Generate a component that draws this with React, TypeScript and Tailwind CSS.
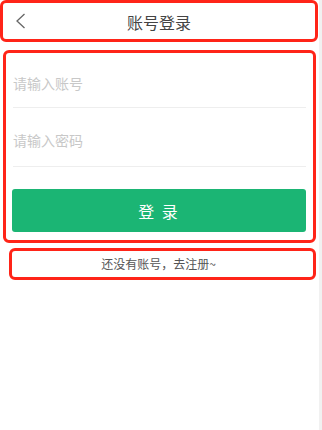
import React from "react";

export default function App() {
  const font = { fontFamily: '"Noto Sans CJK SC", "Noto Sans", sans-serif' };
  return (
    <div className="w-[322px] h-[430px] bg-white flex overflow-hidden" style={font}>
      <div className="w-[319px] flex flex-col">
        {/* header */}
        <div className="w-[318px] h-[42px] border-[3px] border-[#ff2418] rounded-[6px] grid grid-cols-[1fr_auto_1fr] items-center">
          <div className="pl-[13px] flex items-center">
            <svg width="10" height="16" viewBox="0 0 10 16" fill="none">
              <polyline points="8.5,1 1,8 8.5,15" stroke="#666" strokeWidth="1.3" fill="none" />
            </svg>
          </div>
          <div className="text-[16px] leading-[20px] text-[#444] pt-[1px]">账号登录</div>
          <div />
        </div>

        {/* form */}
        <div className="mt-[8px] ml-[3px] w-[313px] border-[3px] border-[#ff2418] rounded-[6px] pl-[6px] pr-[7px] pb-[8px] flex flex-col">
          <div className="h-[55px] border-b border-[#eeeeee] flex items-end pb-[14px] ml-[1px]">
            <span className="text-[14px] leading-[20px] text-[#c8c8c8]">请输入账号</span>
          </div>
          <div className="h-[59px] border-b border-[#eeeeee] flex items-end pb-[16px] ml-[1px]">
            <span className="text-[14px] leading-[20px] text-[#c8c8c8]">请输入密码</span>
          </div>
          <button className="mt-[22px] h-[43px] w-full bg-[#1bb574] rounded-[3px] text-white text-[16px] leading-[20px] tracking-[2px] flex items-center justify-center">
            登 录
          </button>
        </div>

        {/* signup */}
        <div className="mt-[5px] ml-[9px] w-[307px] h-[32px] border-[3px] border-[#ff2418] rounded-[6px] flex items-center justify-center pr-[8px]">
          <span className="text-[12px] leading-[16px] text-[#555]">还没有账号，去注册~</span>
        </div>
      </div>
      <div className="w-[3px] h-full bg-[#f1f1f1]" />
    </div>
  );
}
